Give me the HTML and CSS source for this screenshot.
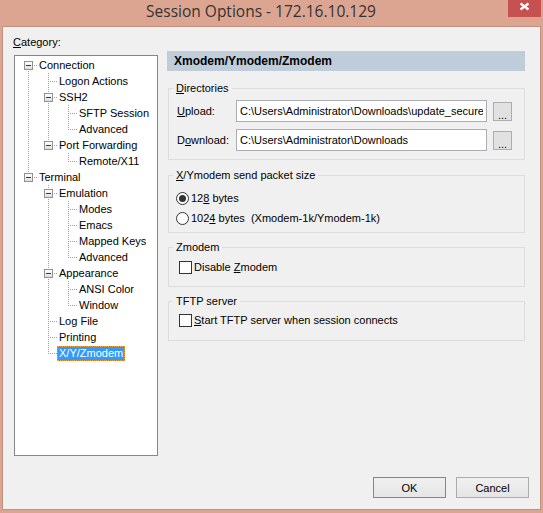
FILE: index.html
```html
<!DOCTYPE html>
<html lang="en">
<head>
<meta charset="utf-8">
<title>Session Options - 172.16.10.129</title>
<link rel="stylesheet" href="styles.css">
</head>
<body>
<div class="window">
  <div class="titlebar">
    <div class="title">Session Options - 172.16.10.129</div>
    <div class="close">
      <svg width="33" height="17" viewBox="0 0 33 17"><path d="M12.5 3.5 L20.5 9.5 M20.5 3.5 L12.5 9.5" stroke="#fff" stroke-width="2.2" fill="none"/></svg>
    </div>
  </div>
  <div class="client">
    <div class="main">
      <div class="left">
        <div class="cat-label"><u>C</u>ategory:</div>
        <div class="tree">
          <div class="row"><span class="c first"><span class="box"></span></span><span class="lbl">Connection</span></div>
          <div class="row"><span class="c pipe"></span><span class="c tee"></span><span class="lbl">Logon Actions</span></div>
          <div class="row"><span class="c pipe"></span><span class="c tee"><span class="box"></span></span><span class="lbl">SSH2</span></div>
          <div class="row"><span class="c pipe"></span><span class="c pipe"></span><span class="c tee"></span><span class="lbl">SFTP Session</span></div>
          <div class="row"><span class="c pipe"></span><span class="c pipe"></span><span class="c elbow"></span><span class="lbl">Advanced</span></div>
          <div class="row"><span class="c pipe"></span><span class="c elbow"><span class="box"></span></span><span class="lbl">Port Forwarding</span></div>
          <div class="row"><span class="c pipe"></span><span class="c"></span><span class="c elbow"></span><span class="lbl">Remote/X11</span></div>
          <div class="row"><span class="c elbow"><span class="box"></span></span><span class="lbl">Terminal</span></div>
          <div class="row"><span class="c"></span><span class="c tee"><span class="box"></span></span><span class="lbl">Emulation</span></div>
          <div class="row"><span class="c"></span><span class="c pipe"></span><span class="c tee"></span><span class="lbl">Modes</span></div>
          <div class="row"><span class="c"></span><span class="c pipe"></span><span class="c tee"></span><span class="lbl">Emacs</span></div>
          <div class="row"><span class="c"></span><span class="c pipe"></span><span class="c tee"></span><span class="lbl">Mapped Keys</span></div>
          <div class="row"><span class="c"></span><span class="c pipe"></span><span class="c elbow"></span><span class="lbl">Advanced</span></div>
          <div class="row"><span class="c"></span><span class="c tee"><span class="box"></span></span><span class="lbl">Appearance</span></div>
          <div class="row"><span class="c"></span><span class="c pipe"></span><span class="c tee"></span><span class="lbl">ANSI Color</span></div>
          <div class="row"><span class="c"></span><span class="c pipe"></span><span class="c elbow"></span><span class="lbl">Window</span></div>
          <div class="row"><span class="c"></span><span class="c tee"></span><span class="lbl">Log File</span></div>
          <div class="row"><span class="c"></span><span class="c tee"></span><span class="lbl">Printing</span></div>
          <div class="row"><span class="c"></span><span class="c elbow"></span><span class="lbl sel">X/Y/Zmodem</span></div>
        </div>
      </div>
      <div class="right">
        <div class="header">Xmodem/Ymodem/Zmodem</div>
        <fieldset class="group dirs">
          <legend><u>D</u>irectories</legend>
          <div class="dirgrid">
            <label><u>U</u>pload:</label>
            <input type="text" value="C:\Users\Administrator\Downloads\update_secureCRT">
            <button class="browse">...</button>
            <label>D<u>o</u>wnload:</label>
            <input type="text" value="C:\Users\Administrator\Downloads">
            <button class="browse">...</button>
          </div>
        </fieldset>
        <fieldset class="group xy">
          <legend><u>X</u>/Ymodem send packet size</legend>
          <div class="opt"><span class="radio on"></span><span>12<u>8</u> bytes</span></div>
          <div class="opt"><span class="radio"></span><span class="pre">102<u>4</u> bytes  (Xmodem-1k/Ymodem-1k)</span></div>
        </fieldset>
        <fieldset class="group zm">
          <legend>Zmodem</legend>
          <div class="opt"><span class="check"></span><span>Disable <u>Z</u>modem</span></div>
        </fieldset>
        <fieldset class="group tftp">
          <legend>TFTP server</legend>
          <div class="opt"><span class="check"></span><span><u>S</u>tart TFTP server when session connects</span></div>
        </fieldset>
      </div>
    </div>
    <div class="footer">
      <button class="btn default">OK</button>
      <button class="btn">Cancel</button>
    </div>
  </div>
</div>
</body>
</html>
```
FILE: styles.css
```css
html, body {
  margin: 0;
  padding: 0;
}
body {
  width: 543px;
  height: 513px;
  overflow: hidden;
  font-family: "Liberation Sans", Arial, sans-serif;
  font-size: 11px;
  color: #000;
  --dotv: repeating-linear-gradient(to bottom, #a0a0a0 0 1px, transparent 1px 2px);
  --doth: repeating-linear-gradient(to right, #a0a0a0 0 1px, transparent 1px 2px);
}
.window {
  box-sizing: border-box;
  width: 543px;
  height: 513px;
  background: #dca592;
  padding: 0 2px 3px 2px;
  display: flex;
  flex-direction: column;
}
.titlebar {
  flex: none;
  height: 26px;
  display: flex;
  align-items: flex-start;
}
.title {
  flex: 1;
  text-align: center;
  padding-left: 12px;
  font-family: "Open Sans", "Noto Sans", sans-serif;
  font-size: 15.5px;
  line-height: 22px;
  color: #333;
  white-space: nowrap;
}
.close {
  flex: none;
  width: 33px;
  height: 17px;
  background: #c75050;
}
.close svg {
  display: block;
}
.client {
  flex: 1;
  border: 1px solid #c3917f;
  background: #f0f0f0;
  padding: 9px 11px 11px 10px;
  display: flex;
  flex-direction: column;
}
.main {
  display: flex;
  align-items: flex-start;
  gap: 9px;
}
.left {
  flex: none;
  width: 145px;
}
.cat-label {
  line-height: 13px;
}
.tree {
  box-sizing: border-box;
  margin: 6px 0 0 1px;
  width: 144px;
  height: 401px;
  border: 1px solid #828790;
  background: #fff;
  padding: 1px 0 0 3px;
}
.row {
  display: flex;
  height: 16px;
}
.c {
  display: block;
  flex: none;
  width: 20px;
  height: 16px;
}
.pipe {
  background: var(--dotv) 10px 0 / 1px 16px no-repeat;
}
.tee {
  background: var(--dotv) 10px 0 / 1px 16px no-repeat,
              var(--doth) 12px 8px / 8px 1px no-repeat;
}
.elbow {
  background: var(--dotv) 10px 0 / 1px 9px no-repeat,
              var(--doth) 12px 8px / 8px 1px no-repeat;
}
.first {
  background: var(--dotv) 10px 8px / 1px 8px no-repeat,
              var(--doth) 12px 8px / 8px 1px no-repeat;
}
.box {
  display: block;
  box-sizing: border-box;
  width: 9px;
  height: 9px;
  margin: 4px 0 0 6px;
  border: 1px solid #919191;
  background: linear-gradient(#ffffff, #dedede);
}
.box::before {
  content: "";
  display: block;
  width: 5px;
  height: 1px;
  margin: 3px 0 0 1px;
  background: #1f3b6a;
}
.lbl {
  margin: 1px 0 0 -1px;
  padding: 0 1px;
  height: 13px;
  line-height: 13px;
  border: 1px solid transparent;
  white-space: nowrap;
}
.lbl.sel {
  background: #3399ff;
  color: #fff;
  border: 1px dotted #f2a23c;
}
.right {
  flex: none;
  width: 358px;
  margin-top: 15px;
}
.header {
  height: 20px;
  line-height: 20px;
  background: #bfcddb;
  font-weight: bold;
  font-size: 12px;
  padding-left: 7px;
}
.group {
  margin: 8px 0 0 1px;
  border: 1px solid #dcdcdc;
  min-width: 0;
}
.group legend {
  padding: 0 3px;
  margin: 0;
  line-height: 13px;
}
.dirs {
  margin-top: 11px;
  padding: 5px 12px 8px 4px;
}
.xy {
  margin-top: 9px;
  padding: 8px 4px 6px 4px;
}
.zm {
  padding: 5px 4px 11px 4px;
}
.tftp {
  padding: 4px 4px 12px 4px;
}
.dirgrid {
  display: grid;
  grid-template-columns: 53px 1fr 19px;
  column-gap: 6px;
  row-gap: 7px;
  align-items: center;
  margin-left: 4px;
}
.dirgrid input {
  box-sizing: border-box;
  width: 100%;
  min-width: 0;
  height: 22px;
  margin: 0;
  border: 1px solid #abadb3;
  border-radius: 0;
  padding: 0 3px;
  background: #fff;
  font-family: "Liberation Sans", Arial, sans-serif;
  font-size: 11px;
  color: #000;
  outline: none;
}
.browse {
  box-sizing: border-box;
  width: 19px;
  height: 19px;
  margin: 0;
  padding: 6px 0 0 0;
  border: 1px solid #adadad;
  border-radius: 0;
  background: #e1e1e1;
  font-family: "Liberation Sans", Arial, sans-serif;
  font-size: 11px;
  color: #000;
}
.opt {
  display: flex;
  align-items: center;
  height: 16px;
}
.opt + .opt {
  margin-top: 4px;
}
.pre {
  white-space: pre;
}
.radio {
  flex: none;
  box-sizing: border-box;
  width: 13px;
  height: 13px;
  margin: 0 2px 0 3px;
  border: 1px solid #333;
  border-radius: 50%;
  background: #fff;
  display: flex;
  align-items: center;
  justify-content: center;
}
.radio.on::before {
  content: "";
  width: 7px;
  height: 7px;
  border-radius: 50%;
  background: #333;
}
.check {
  flex: none;
  box-sizing: border-box;
  width: 13px;
  height: 13px;
  margin: 0 2px 0 6px;
  border: 1px solid #333;
  background: #fff;
}
.footer {
  margin-top: auto;
  display: flex;
  justify-content: flex-end;
  gap: 10px;
}
.btn {
  box-sizing: border-box;
  width: 73px;
  height: 21px;
  margin: 0;
  padding: 0;
  border: 1px solid #acacac;
  border-radius: 0;
  background: linear-gradient(#f0f0f0, #e5e5e5);
  font-family: "Liberation Sans", Arial, sans-serif;
  font-size: 11px;
  color: #000;
}
.btn.default {
  border-color: #3399ff;
}
```
